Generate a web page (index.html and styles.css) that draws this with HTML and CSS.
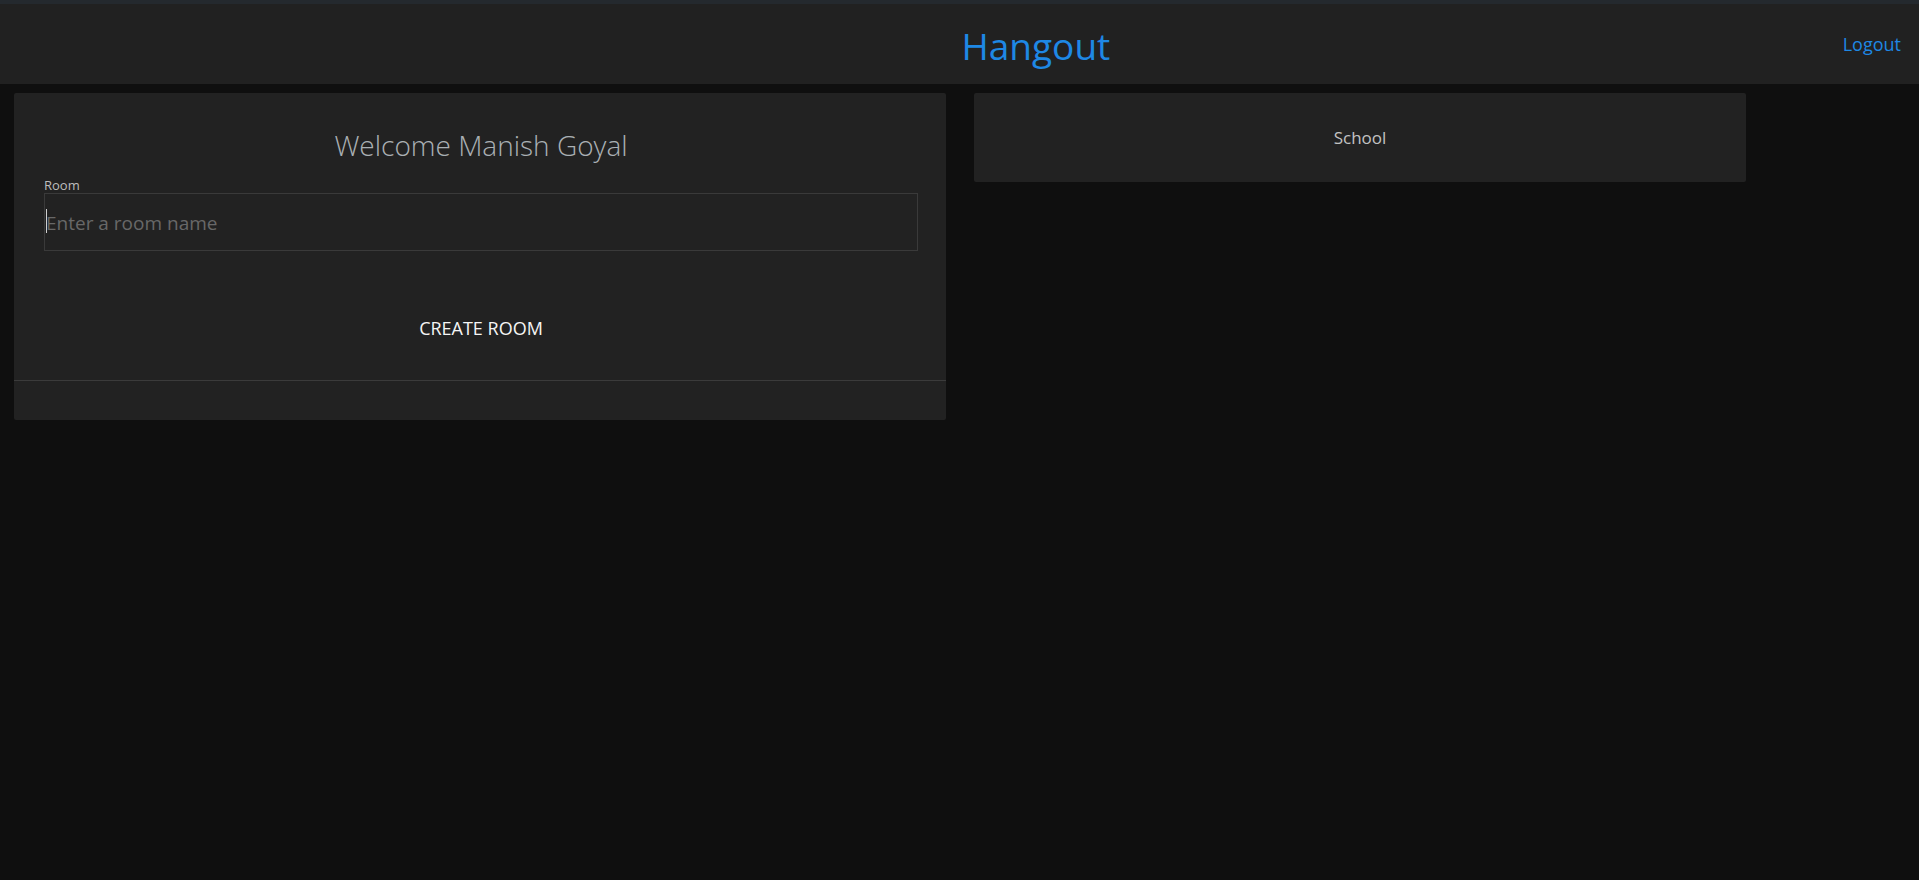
FILE: index.html
```html
<!DOCTYPE html>
<html lang="en">
<head>
<meta charset="utf-8">
<title>Hangout</title>
<link rel="stylesheet" href="styles.css">
</head>
<body>
<header class="topbar">
  <div class="topbar-left"></div>
  <div class="topbar-right">
    <h1 class="brand">Hangout</h1>
    <a class="logout" href="#">Logout</a>
  </div>
</header>
<main class="content">
  <section class="card create-card">
    <div class="card-body">
      <h2 class="welcome">Welcome Manish Goyal</h2>
      <label class="field-label" for="room">Room</label>
      <div class="field">
        <span class="caret"></span>
        <input id="room" class="field-input" type="text" placeholder="Enter a room name">
      </div>
      <button class="create-btn" type="button">CREATE ROOM</button>
    </div>
    <div class="card-footer"></div>
  </section>
  <section class="card room-card">
    <div class="room-name">School</div>
  </section>
</main>
</body>
</html>
```

FILE: styles.css
```css
* { box-sizing: border-box; }

html, body {
  margin: 0;
  padding: 0;
  background: #0f0f0f;
  font-family: "Open Sans", "Noto Sans", sans-serif;
  height: 100%;
}

.topbar {
  height: 84px;
  background: #212121;
  border-top: 4px solid #24292e;
  display: grid;
  grid-template-columns: 1fr 1fr;
  align-items: center;
}

.topbar-right {
  display: flex;
  align-items: center;
  justify-content: space-between;
  padding: 0 18px 0 2px;
}

.brand {
  margin: 0;
  font-weight: 400;
  font-size: 37px;
  line-height: 44px;
  color: #1e88e5;
  position: relative;
  top: 2px;
}

.logout {
  color: #1e88e5;
  text-decoration: none;
  font-size: 18px;
  line-height: 22px;
  position: relative;
  top: 0;
}

.content {
  display: flex;
  align-items: flex-start;
  gap: 28px;
  padding: 9px 14px;
}

.card {
  background: #222222;
  border-radius: 2px;
}

.create-card {
  width: 932px;
}

.card-body {
  padding: 32px 28px 0 30px;
  display: flex;
  flex-direction: column;
}

.welcome {
  margin: 0;
  text-align: center;
  font-weight: 300;
  font-size: 28px;
  line-height: 40px;
  color: #aab0b4;
}

.field-label {
  margin-top: 13px;
  font-size: 13px;
  line-height: 15px;
  color: #bdbdbd;
}

.field {
  position: relative;
  height: 58px;
  border: 1px solid #3a3a3a;
  display: flex;
  align-items: center;
}

.caret {
  position: absolute;
  left: 1px;
  top: 15px;
  width: 1px;
  height: 24px;
  background: #cfcfcf;
}

.field-input {
  width: 100%;
  height: 100%;
  border: 0;
  outline: none;
  background: transparent;
  padding: 2px 0 0 1px;
  font-family: inherit;
  font-size: 19px;
  color: #ddd;
}

.field-input::placeholder {
  color: #686868;
}

.create-btn {
  margin: 59px auto 34px;
  height: 36px;
  padding: 0 16px;
  border: 0;
  background: transparent;
  font-family: inherit;
  font-size: 18px;
  line-height: 36px;
  color: #f5f5f5;
  cursor: pointer;
}

.card-footer {
  height: 40px;
  border-top: 1px solid #3b3b3b;
}

.room-card {
  width: 772px;
  height: 89px;
  display: flex;
  align-items: center;
  justify-content: center;
}

.room-name {
  font-size: 17px;
  color: #c2c2c2;
}
```
